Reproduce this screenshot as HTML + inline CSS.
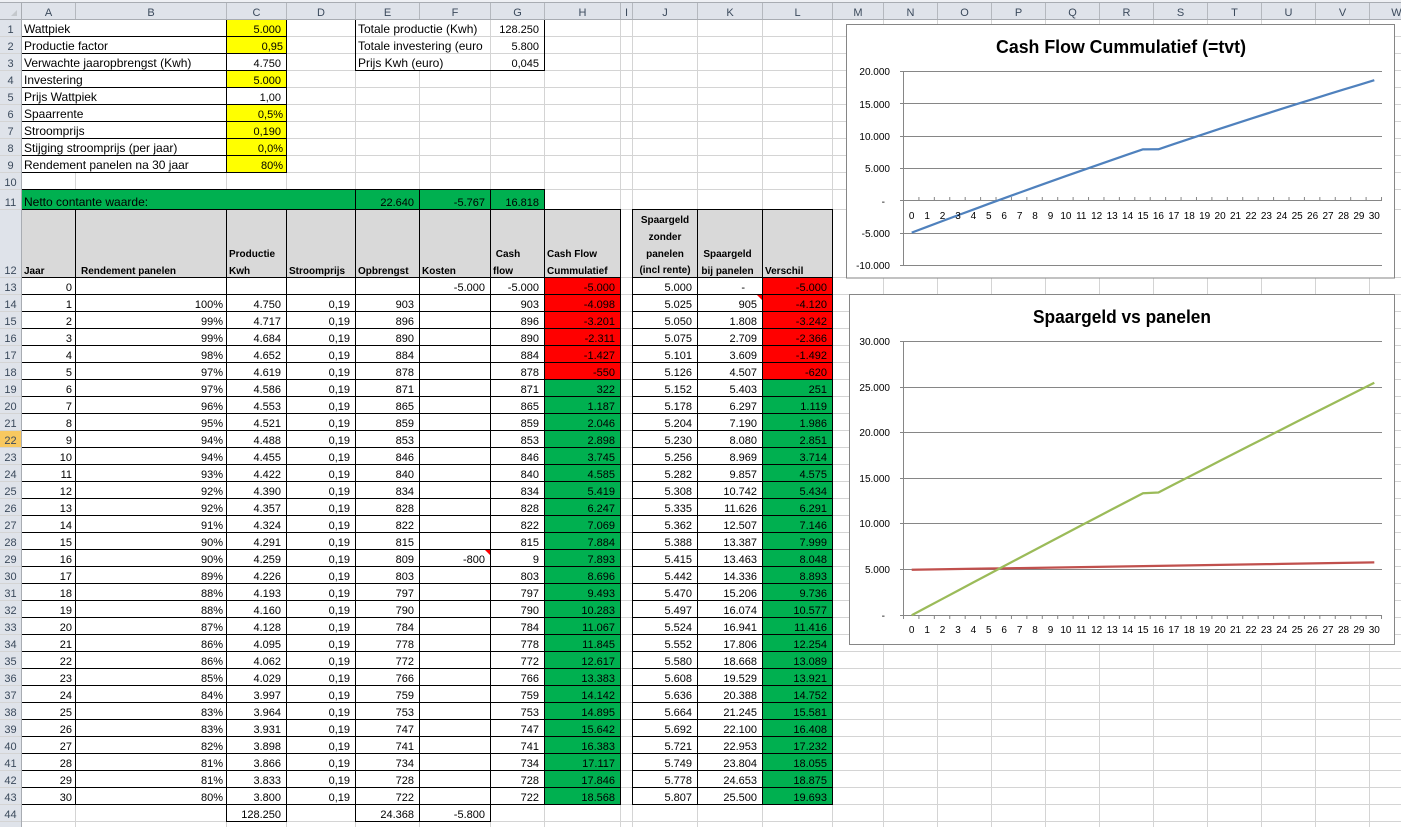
<!DOCTYPE html>
<html><head><meta charset="utf-8"><title>Zonnepanelen</title>
<style>
html,body{margin:0;padding:0;width:1401px;height:827px;overflow:hidden;background:#fff}
body{position:relative;font-family:"Liberation Sans",sans-serif;font-size:11px;color:#000}
table{position:absolute;left:-1px;top:2px;width:1425px;table-layout:fixed;border-collapse:separate;border-spacing:1px;background:#d4d4d4}
td,th{height:16px;line-height:12px;padding:4px 0 0;box-sizing:border-box;white-space:nowrap;overflow:hidden;vertical-align:bottom;font-weight:normal}
td{background:#fff;text-align:right;padding-right:5px}
th{background:#dfe3ea;color:#3b4a5c;text-align:center}
.c th{box-shadow:1px 0 0 #b4b8be}
.o,.q td{outline:1px solid #000}
.q td:nth-child(10),.q td:nth-child(14){outline:0}
.q td:nth-child(2),.q td:nth-child(3){padding-right:3px}
td.l{text-align:left;padding:2px 0 0 2px;font-size:12px;line-height:14px}
.y{background:#ff0}.p{padding-right:3px}
.r{background:#f00}.g{background:#00b050}
.h td{height:67px;line-height:17px;background:#d9d9d9;font-weight:bold;font-size:10px;text-align:left;padding:0 0 0 2px}
.h td:nth-child(10),.h td:nth-child(14){background:#fff}
.h span{display:block;position:relative;top:3px}
.m td{height:19px}
.m th{height:19px}
.h th{height:67px}
.ln{position:absolute;z-index:2}
svg{position:absolute;left:0;top:0;z-index:3}
svg text{font-family:"Liberation Sans",sans-serif;font-size:10px;fill:#000}
svg .t{font-size:18px;font-weight:bold}
</style></head><body>
<div class="ln" style="left:0;top:0;width:1401px;height:2px;background:#eef0f4"></div>
<div class="ln" style="left:883px;top:20px;width:518px;height:807px;background:repeating-linear-gradient(90deg,#d4d4d4 0 1px,transparent 1px 54px)"></div>
<table>
<colgroup><col style="width:21px"><col style="width:53px"><col style="width:150px"><col style="width:59px"><col style="width:68px"><col style="width:63px"><col style="width:70px"><col style="width:53px"><col style="width:75px"><col style="width:11px"><col style="width:64px"><col style="width:64px"><col style="width:69px"><col style="width:50px"><col style="width:53px"><col style="width:53px"><col style="width:53px"><col style="width:53px"><col style="width:53px"><col style="width:53px"><col style="width:53px"><col style="width:53px"><col style="width:53px"><col style="width:53px"></colgroup>
<tr class="c"><th></th><th>A</th><th>B</th><th>C</th><th>D</th><th>E</th><th>F</th><th>G</th><th>H</th><th>I</th><th>J</th><th>K</th><th>L</th><th>M</th><th>N</th><th>O</th><th>P</th><th>Q</th><th>R</th><th>S</th><th>T</th><th>U</th><th>V</th><th>W</th></tr>
<tr><th>1</th><td class="l o" colspan="2">Wattpiek</td><td class="o y">5.000</td><td></td><td class="l" colspan="2">Totale productie (Kwh)</td><td>128.250</td><td></td><td></td><td></td><td></td><td></td><td colspan="11"></td></tr>
<tr><th>2</th><td class="l o" colspan="2">Productie factor</td><td class="o y p">0,95</td><td></td><td class="l" colspan="2">Totale investering (euro</td><td>5.800</td><td></td><td></td><td></td><td></td><td></td><td colspan="11"></td></tr>
<tr><th>3</th><td class="l o" colspan="2">Verwachte jaaropbrengst (Kwh)</td><td class="o">4.750</td><td></td><td class="l" colspan="2">Prijs Kwh (euro)</td><td>0,045</td><td></td><td></td><td></td><td></td><td></td><td colspan="11"></td></tr>
<tr><th>4</th><td class="l o" colspan="2">Investering</td><td class="o y">5.000</td><td></td><td></td><td></td><td></td><td></td><td></td><td></td><td></td><td></td><td colspan="11"></td></tr>
<tr><th>5</th><td class="l o" colspan="2">Prijs Wattpiek</td><td class="o">1,00</td><td></td><td></td><td></td><td></td><td></td><td></td><td></td><td></td><td></td><td colspan="11"></td></tr>
<tr><th>6</th><td class="l o" colspan="2">Spaarrente</td><td class="o y p">0,5%</td><td></td><td></td><td></td><td></td><td></td><td></td><td></td><td></td><td></td><td colspan="11"></td></tr>
<tr><th>7</th><td class="l o" colspan="2">Stroomprijs</td><td class="o y">0,190</td><td></td><td></td><td></td><td></td><td></td><td></td><td></td><td></td><td></td><td colspan="11"></td></tr>
<tr><th>8</th><td class="l o" colspan="2">Stijging stroomprijs (per jaar)</td><td class="o y p">0,0%</td><td></td><td></td><td></td><td></td><td></td><td></td><td></td><td></td><td></td><td colspan="11"></td></tr>
<tr><th>9</th><td class="l o" colspan="2">Rendement panelen na 30 jaar</td><td class="o y p">80%</td><td></td><td></td><td></td><td></td><td></td><td></td><td></td><td></td><td></td><td colspan="11"></td></tr>
<tr><th>10</th><td></td><td></td><td></td><td></td><td></td><td></td><td></td><td></td><td></td><td></td><td></td><td></td><td colspan="11"></td></tr>
<tr class="m"><th>11</th><td class="l o g" colspan="4">Netto contante waarde:</td><td class="o g">22.640</td><td class="o g">-5.767</td><td class="o g">16.818</td><td></td><td></td><td></td><td></td><td></td><td colspan="11"></td></tr>
<tr class="h q"><th>12</th><td><span>Jaar</span></td><td style="padding-left:5px"><span>Rendement panelen</span></td><td><span>Productie<br>Kwh</span></td><td><span>Stroomprijs</span></td><td><span>Opbrengst</span></td><td><span>Kosten</span></td><td><span>&nbsp;Cash<br>flow</span></td><td><span>Cash Flow<br>Cummulatief</span></td><td></td><td style="text-align:center;padding:0;line-height:16.75px"><span>Spaargeld<br>zonder<br>panelen<br>(incl rente)</span></td><td style="text-align:center;padding:0 5px 0 0"><span>Spaargeld<br>bij panelen</span></td><td><span>Verschil</span></td><td colspan="11"></td></tr>
<tr class="q"><th>13</th><td>0</td><td></td><td></td><td></td><td></td><td>-5.000</td><td>-5.000</td><td class="r">-5.000</td><td></td><td>5.000</td><td style="padding-right:17px">-</td><td class="r">-5.000</td><td colspan="11"></td></tr>
<tr class="q"><th>14</th><td>1</td><td>100%</td><td>4.750</td><td>0,19</td><td>903</td><td></td><td>903</td><td class="r">-4.098</td><td></td><td>5.025</td><td>905</td><td class="r">-4.120</td><td colspan="11"></td></tr>
<tr class="q"><th>15</th><td>2</td><td>99%</td><td>4.717</td><td>0,19</td><td>896</td><td></td><td>896</td><td class="r">-3.201</td><td></td><td>5.050</td><td>1.808</td><td class="r">-3.242</td><td colspan="11"></td></tr>
<tr class="q"><th>16</th><td>3</td><td>99%</td><td>4.684</td><td>0,19</td><td>890</td><td></td><td>890</td><td class="r">-2.311</td><td></td><td>5.075</td><td>2.709</td><td class="r">-2.366</td><td colspan="11"></td></tr>
<tr class="q"><th>17</th><td>4</td><td>98%</td><td>4.652</td><td>0,19</td><td>884</td><td></td><td>884</td><td class="r">-1.427</td><td></td><td>5.101</td><td>3.609</td><td class="r">-1.492</td><td colspan="11"></td></tr>
<tr class="q"><th>18</th><td>5</td><td>97%</td><td>4.619</td><td>0,19</td><td>878</td><td></td><td>878</td><td class="r">-550</td><td></td><td>5.126</td><td>4.507</td><td class="r">-620</td><td colspan="11"></td></tr>
<tr class="q"><th>19</th><td>6</td><td>97%</td><td>4.586</td><td>0,19</td><td>871</td><td></td><td>871</td><td class="g">322</td><td></td><td>5.152</td><td>5.403</td><td class="g">251</td><td colspan="11"></td></tr>
<tr class="q"><th>20</th><td>7</td><td>96%</td><td>4.553</td><td>0,19</td><td>865</td><td></td><td>865</td><td class="g">1.187</td><td></td><td>5.178</td><td>6.297</td><td class="g">1.119</td><td colspan="11"></td></tr>
<tr class="q"><th>21</th><td>8</td><td>95%</td><td>4.521</td><td>0,19</td><td>859</td><td></td><td>859</td><td class="g">2.046</td><td></td><td>5.204</td><td>7.190</td><td class="g">1.986</td><td colspan="11"></td></tr>
<tr class="q"><th style="background:#f8c860">22</th><td>9</td><td>94%</td><td>4.488</td><td>0,19</td><td>853</td><td></td><td>853</td><td class="g">2.898</td><td></td><td>5.230</td><td>8.080</td><td class="g">2.851</td><td colspan="11"></td></tr>
<tr class="q"><th>23</th><td>10</td><td>94%</td><td>4.455</td><td>0,19</td><td>846</td><td></td><td>846</td><td class="g">3.745</td><td></td><td>5.256</td><td>8.969</td><td class="g">3.714</td><td colspan="11"></td></tr>
<tr class="q"><th>24</th><td>11</td><td>93%</td><td>4.422</td><td>0,19</td><td>840</td><td></td><td>840</td><td class="g">4.585</td><td></td><td>5.282</td><td>9.857</td><td class="g">4.575</td><td colspan="11"></td></tr>
<tr class="q"><th>25</th><td>12</td><td>92%</td><td>4.390</td><td>0,19</td><td>834</td><td></td><td>834</td><td class="g">5.419</td><td></td><td>5.308</td><td>10.742</td><td class="g">5.434</td><td colspan="11"></td></tr>
<tr class="q"><th>26</th><td>13</td><td>92%</td><td>4.357</td><td>0,19</td><td>828</td><td></td><td>828</td><td class="g">6.247</td><td></td><td>5.335</td><td>11.626</td><td class="g">6.291</td><td colspan="11"></td></tr>
<tr class="q"><th>27</th><td>14</td><td>91%</td><td>4.324</td><td>0,19</td><td>822</td><td></td><td>822</td><td class="g">7.069</td><td></td><td>5.362</td><td>12.507</td><td class="g">7.146</td><td colspan="11"></td></tr>
<tr class="q"><th>28</th><td>15</td><td>90%</td><td>4.291</td><td>0,19</td><td>815</td><td></td><td>815</td><td class="g">7.884</td><td></td><td>5.388</td><td>13.387</td><td class="g">7.999</td><td colspan="11"></td></tr>
<tr class="q"><th>29</th><td>16</td><td>90%</td><td>4.259</td><td>0,19</td><td>809</td><td>-800</td><td>9</td><td class="g">7.893</td><td></td><td>5.415</td><td>13.463</td><td class="g">8.048</td><td colspan="11"></td></tr>
<tr class="q"><th>30</th><td>17</td><td>89%</td><td>4.226</td><td>0,19</td><td>803</td><td></td><td>803</td><td class="g">8.696</td><td></td><td>5.442</td><td>14.336</td><td class="g">8.893</td><td colspan="11"></td></tr>
<tr class="q"><th>31</th><td>18</td><td>88%</td><td>4.193</td><td>0,19</td><td>797</td><td></td><td>797</td><td class="g">9.493</td><td></td><td>5.470</td><td>15.206</td><td class="g">9.736</td><td colspan="11"></td></tr>
<tr class="q"><th>32</th><td>19</td><td>88%</td><td>4.160</td><td>0,19</td><td>790</td><td></td><td>790</td><td class="g">10.283</td><td></td><td>5.497</td><td>16.074</td><td class="g">10.577</td><td colspan="11"></td></tr>
<tr class="q"><th>33</th><td>20</td><td>87%</td><td>4.128</td><td>0,19</td><td>784</td><td></td><td>784</td><td class="g">11.067</td><td></td><td>5.524</td><td>16.941</td><td class="g">11.416</td><td colspan="11"></td></tr>
<tr class="q"><th>34</th><td>21</td><td>86%</td><td>4.095</td><td>0,19</td><td>778</td><td></td><td>778</td><td class="g">11.845</td><td></td><td>5.552</td><td>17.806</td><td class="g">12.254</td><td colspan="11"></td></tr>
<tr class="q"><th>35</th><td>22</td><td>86%</td><td>4.062</td><td>0,19</td><td>772</td><td></td><td>772</td><td class="g">12.617</td><td></td><td>5.580</td><td>18.668</td><td class="g">13.089</td><td colspan="11"></td></tr>
<tr class="q"><th>36</th><td>23</td><td>85%</td><td>4.029</td><td>0,19</td><td>766</td><td></td><td>766</td><td class="g">13.383</td><td></td><td>5.608</td><td>19.529</td><td class="g">13.921</td><td colspan="11"></td></tr>
<tr class="q"><th>37</th><td>24</td><td>84%</td><td>3.997</td><td>0,19</td><td>759</td><td></td><td>759</td><td class="g">14.142</td><td></td><td>5.636</td><td>20.388</td><td class="g">14.752</td><td colspan="11"></td></tr>
<tr class="q"><th>38</th><td>25</td><td>83%</td><td>3.964</td><td>0,19</td><td>753</td><td></td><td>753</td><td class="g">14.895</td><td></td><td>5.664</td><td>21.245</td><td class="g">15.581</td><td colspan="11"></td></tr>
<tr class="q"><th>39</th><td>26</td><td>83%</td><td>3.931</td><td>0,19</td><td>747</td><td></td><td>747</td><td class="g">15.642</td><td></td><td>5.692</td><td>22.100</td><td class="g">16.408</td><td colspan="11"></td></tr>
<tr class="q"><th>40</th><td>27</td><td>82%</td><td>3.898</td><td>0,19</td><td>741</td><td></td><td>741</td><td class="g">16.383</td><td></td><td>5.721</td><td>22.953</td><td class="g">17.232</td><td colspan="11"></td></tr>
<tr class="q"><th>41</th><td>28</td><td>81%</td><td>3.866</td><td>0,19</td><td>734</td><td></td><td>734</td><td class="g">17.117</td><td></td><td>5.749</td><td>23.804</td><td class="g">18.055</td><td colspan="11"></td></tr>
<tr class="q"><th>42</th><td>29</td><td>81%</td><td>3.833</td><td>0,19</td><td>728</td><td></td><td>728</td><td class="g">17.846</td><td></td><td>5.778</td><td>24.653</td><td class="g">18.875</td><td colspan="11"></td></tr>
<tr class="q"><th>43</th><td>30</td><td>80%</td><td>3.800</td><td>0,19</td><td>722</td><td></td><td>722</td><td class="g">18.568</td><td></td><td>5.807</td><td>25.500</td><td class="g">19.693</td><td colspan="11"></td></tr>
<tr><th>44</th><td></td><td></td><td class="o">128.250</td><td></td><td class="o">24.368</td><td class="o">-5.800</td><td></td><td></td><td></td><td></td><td></td><td></td><td colspan="11"></td></tr>
<tr><th></th><td></td><td></td><td></td><td></td><td></td><td></td><td></td><td></td><td></td><td></td><td></td><td></td><td colspan="11"></td></tr>
</table>
<div class="ln" style="left:355px;top:20px;width:1px;height:51px;background:#000"></div>
<div class="ln" style="left:544px;top:20px;width:1px;height:51px;background:#000"></div>
<div class="ln" style="left:355px;top:70px;width:190px;height:1px;background:#000"></div>
<div class="ln" style="left:21px;top:3px;width:1px;height:824px;background:#a8acb2"></div>
<div class="ln" style="left:0;top:19px;width:1401px;height:1px;background:#a8acb2"></div>
<div class="ln" style="left:0;top:2px;width:1401px;height:1px;background:#a8acb2"></div>
<svg width="1401" height="827" viewBox="0 0 1401 827" xmlns="http://www.w3.org/2000/svg">
<polygon points="11,16 17,16 17,10" fill="#c4c8cc"/>
<polygon points="757,295 762,295 762,300" fill="#f00"/>
<polygon points="485,550 490,550 490,555" fill="#f00"/>
<rect x="846.5" y="24.5" width="548" height="253.5" fill="#fff" stroke="#868686"/>
<rect x="849.5" y="294.5" width="545" height="350" fill="#fff" stroke="#868686"/>
<text class="t" x="996" y="53" textLength="250" lengthAdjust="spacingAndGlyphs">Cash Flow Cummulatief (=tvt)</text>
<text class="t" x="1033" y="323" textLength="178" lengthAdjust="spacingAndGlyphs">Spaargeld vs panelen</text>
<g stroke="#868686" stroke-width="1" fill="none">
<path d="M900 71.5H1382M900 103.5H1382M900 136.5H1382M900 168.5H1382M900 200.5H1382M900 233.5H1382M900 265.5H1382M903.5 71V266"/>
<line x1="903" x2="1383" y1="198.5" y2="198.5" stroke-width="3" stroke-dasharray="1 14.42"/>
<path d="M900 341.5H1382M900 387.5H1382M900 432.5H1382M900 478.5H1382M900 523.5H1382M900 569.5H1382M900 615.5H1382M903.5 341V619"/>
<line x1="903" x2="1383" y1="617" y2="617" stroke-width="4" stroke-dasharray="1 14.42"/>
</g>
<g fill="none" stroke-width="2.25" stroke-linejoin="round">
<g transform="translate(911.7,200.3) scale(15.42,-0.006467)"><polyline vector-effect="non-scaling-stroke" stroke="#4f81bd" points="0,-5000 1,-4098 2,-3201 3,-2311 4,-1427 5,-550 6,322 7,1187 8,2046 9,2898 10,3745 11,4585 12,5419 13,6247 14,7069 15,7884 16,7893 17,8696 18,9493 19,10283 20,11067 21,11845 22,12617 23,13383 24,14142 25,14895 26,15642 27,16383 28,17117 29,17846 30,18568"/></g>
<g transform="translate(911.7,615.3) scale(15.42,-0.00912)">
<polyline vector-effect="non-scaling-stroke" stroke="#c0504d" points="0,5000 1,5025 2,5050 3,5075 4,5101 5,5126 6,5152 7,5178 8,5204 9,5230 10,5256 11,5282 12,5308 13,5335 14,5362 15,5388 16,5415 17,5442 18,5470 19,5497 20,5524 21,5552 22,5580 23,5608 24,5636 25,5664 26,5692 27,5721 28,5749 29,5778 30,5807"/>
<polyline vector-effect="non-scaling-stroke" stroke="#9bbb59" points="0,0 1,905 2,1808 3,2709 4,3609 5,4507 6,5403 7,6297 8,7190 9,8080 10,8969 11,9857 12,10742 13,11626 14,12507 15,13387 16,13463 17,14336 18,15206 19,16074 20,16941 21,17806 22,18668 23,19529 24,20388 25,21245 26,22100 27,22953 28,23804 29,24653 30,25500"/>
</g>
</g>
<g text-anchor="end">
<text x="890" y="75">20.000</text><text x="890" y="108">15.000</text><text x="890" y="140">10.000</text><text x="890" y="172">5.000</text><text x="885" y="205">-</text><text x="890" y="237">-5.000</text><text x="890" y="269">-10.000</text>
<text x="890" y="345">30.000</text><text x="890" y="391">25.000</text><text x="890" y="436">20.000</text><text x="890" y="482">15.000</text><text x="890" y="527">10.000</text><text x="890" y="573">5.000</text><text x="885" y="619">-</text>
</g>
<g text-anchor="middle">
<text x="911.7" y="219">0</text><text x="927.1" y="219">1</text><text x="942.5" y="219">2</text><text x="958" y="219">3</text><text x="973.4" y="219">4</text><text x="988.8" y="219">5</text><text x="1004.2" y="219">6</text><text x="1019.6" y="219">7</text><text x="1035" y="219">8</text><text x="1050.5" y="219">9</text><text x="1065.9" y="219">10</text><text x="1081.3" y="219">11</text><text x="1096.7" y="219">12</text><text x="1112.2" y="219">13</text><text x="1127.6" y="219">14</text><text x="1143" y="219">15</text><text x="1158.4" y="219">16</text><text x="1173.8" y="219">17</text><text x="1189.3" y="219">18</text><text x="1204.7" y="219">19</text><text x="1220.1" y="219">20</text><text x="1235.5" y="219">21</text><text x="1251" y="219">22</text><text x="1266.4" y="219">23</text><text x="1281.8" y="219">24</text><text x="1297.2" y="219">25</text><text x="1312.6" y="219">26</text><text x="1328" y="219">27</text><text x="1343.5" y="219">28</text><text x="1358.9" y="219">29</text><text x="1374.3" y="219">30</text>
<text x="911.7" y="633">0</text><text x="927.1" y="633">1</text><text x="942.5" y="633">2</text><text x="958" y="633">3</text><text x="973.4" y="633">4</text><text x="988.8" y="633">5</text><text x="1004.2" y="633">6</text><text x="1019.6" y="633">7</text><text x="1035" y="633">8</text><text x="1050.5" y="633">9</text><text x="1065.9" y="633">10</text><text x="1081.3" y="633">11</text><text x="1096.7" y="633">12</text><text x="1112.2" y="633">13</text><text x="1127.6" y="633">14</text><text x="1143" y="633">15</text><text x="1158.4" y="633">16</text><text x="1173.8" y="633">17</text><text x="1189.3" y="633">18</text><text x="1204.7" y="633">19</text><text x="1220.1" y="633">20</text><text x="1235.5" y="633">21</text><text x="1251" y="633">22</text><text x="1266.4" y="633">23</text><text x="1281.8" y="633">24</text><text x="1297.2" y="633">25</text><text x="1312.6" y="633">26</text><text x="1328" y="633">27</text><text x="1343.5" y="633">28</text><text x="1358.9" y="633">29</text><text x="1374.3" y="633">30</text>
</g>
</svg>
</body></html>
